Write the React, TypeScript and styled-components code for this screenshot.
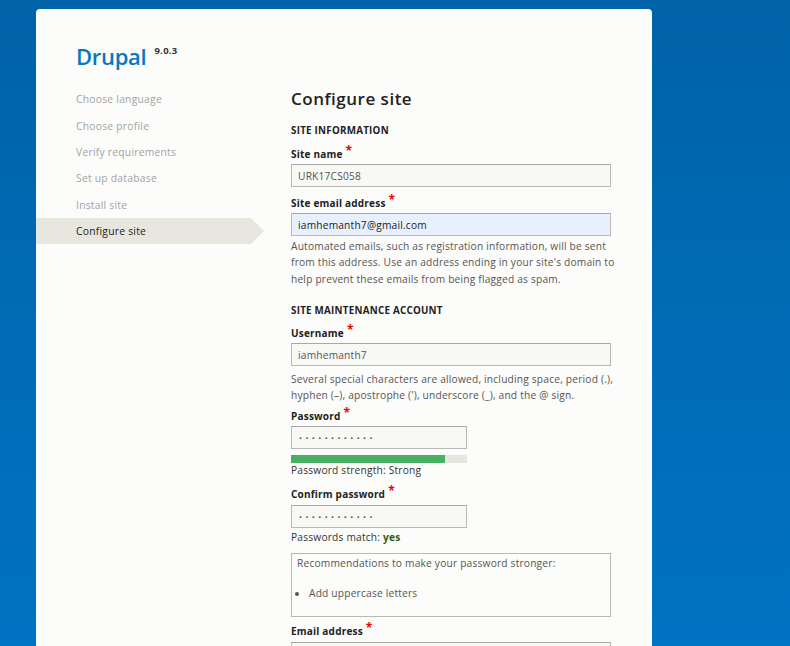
import React from "react";
import styled, { createGlobalStyle } from "styled-components";

const Global = createGlobalStyle`
  html, body { margin: 0; padding: 0; height: 100%; }
  body {
    background: linear-gradient(180deg, #0062a7 0%, #006bb6 50%, #0073c2 100%);
    font-family: "Open Sans", "Noto Sans", sans-serif;
    overflow: hidden;
  }
  #root { height: 646px; }
`;

const Page = styled.div`
  height: 646px;
  padding: 9px 138px 0 36px;
  box-sizing: border-box;
`;

const Card = styled.div`
  background: #fcfcfa;
  border-radius: 4px 4px 0 0;
  height: 100%;
  padding-top: 34px;
  box-sizing: border-box;
  overflow: hidden;
`;

const Brand = styled.div`
  display: flex;
  align-items: flex-start;
  padding-left: 40px;
  height: 43px;
`;

const Logo = styled.span`
  font-size: 22px;
  line-height: 26px;
  color: #0678be;
  font-weight: 600;
  letter-spacing: -0.3px;
`;

const Version = styled.span`
  font-size: 9.5px;
  font-weight: 700;
  color: #333;
  margin-left: 8px;
  margin-top: 1px;
  letter-spacing: 0.3px;
`;

const Layout = styled.div`
  display: grid;
  grid-template-columns: 228px 1fr;
  column-gap: 27px;
  padding-right: 35px;
`;

const Steps = styled.ol`
  list-style: none;
  margin: 0;
  padding: 0;
`;

const Step = styled.li<{ $active?: boolean }>`
  position: relative;
  height: 26.4px;
  display: flex;
  align-items: center;
  padding-left: 40px;
  font-size: 10.3px;
  letter-spacing: 0.25px;
  color: ${(p) => (p.$active ? "#222" : "#a3a3a3")};
  background: ${(p) => (p.$active ? "#e7e6df" : "transparent")};
  margin-right: ${(p) => (p.$active ? "13px" : "0")};
  &::after {
    content: "";
    display: ${(p) => (p.$active ? "block" : "none")};
    position: absolute;
    right: -13px;
    top: 0;
    border-left: 13px solid #e7e6df;
    border-top: 13.2px solid transparent;
    border-bottom: 13.2px solid transparent;
  }
`;

const Main = styled.div`
  color: #333;
`;

const Title = styled.h1`
  margin: 0;
  font-size: 17px;
  line-height: 20px;
  font-weight: 600;
  letter-spacing: 0.5px;
  color: #222;
  padding-top: 3px;
`;

const SectionTitle = styled.h2<{ $top?: number }>`
  margin: 0;
  font-size: 9.8px;
  line-height: 13px;
  font-weight: 700;
  letter-spacing: 0.25px;
  text-transform: uppercase;
  color: #222;
  margin-top: ${(p) => p.$top ?? 14.5}px;
`;

const Field = styled.div<{ $top?: number }>`
  margin-top: ${(p) => p.$top ?? 10}px;
`;

const Label = styled.label<{ $gap?: number }>`
  display: block;
  font-size: 10px;
  line-height: 13px;
  font-weight: 700;
  letter-spacing: 0.2px;
  color: #222;
  margin-bottom: ${(p) => p.$gap ?? 3.5}px;
`;

const Req = styled.span`
  color: #e00;
  font-size: 12px;
  margin-left: 3px;
  vertical-align: 3px;
  line-height: 0;
`;

const Input = styled.div<{ $narrow?: boolean; $autofill?: boolean }>`
  box-sizing: border-box;
  width: ${(p) => (p.$narrow ? "176px" : "320px")};
  height: 23px;
  border: 1px solid #b8b8b8;
  border-top-color: #a8a8a8;
  background: ${(p) => (p.$autofill ? "#e8f0fe" : "#f8f8f5")};
  font-size: 10.2px;
  letter-spacing: 0.2px;
  color: ${(p) => (p.$autofill ? "#222" : "#555")};
  display: flex;
  align-items: center;
  padding-left: 6px;
`;

const Dots = styled.span`
  letter-spacing: 3.4px;
  font-size: 8px;
  color: #555;
  padding-left: 1px;
`;

const Desc = styled.div<{ $top?: number }>`
  font-size: 10.2px;
  line-height: 16.5px;
  letter-spacing: 0.2px;
  color: #555;
  margin-top: ${(p) => p.$top ?? 1.75}px;
  max-width: 326px;
`;

const Meter = styled.div`
  width: 176px;
  height: 8px;
  background: #e6e6e0;
  margin-top: 6px;
`;

const MeterFill = styled.div`
  height: 100%;
  background: #48b063;
`;

const Status = styled.div<{ $top?: number }>`
  font-size: 10.2px;
  line-height: 14px;
  letter-spacing: 0.2px;
  color: #333;
  margin-top: ${(p) => p.$top ?? 0}px;
`;

const Yes = styled.strong`
  color: #325e1c;
`;

const Recs = styled.div`
  box-sizing: border-box;
  width: 320px;
  height: 64px;
  border: 1px solid #b8b8b8;
  margin-top: 9px;
  padding: 2px 5px;
  font-size: 10.2px;
  line-height: 14px;
  letter-spacing: 0.2px;
  color: #555;
`;

const RecList = styled.ul`
  margin: 16px 0 0;
  padding: 0 0 0 12px;
`;

const steps = [
  "Choose language",
  "Choose profile",
  "Verify requirements",
  "Set up database",
  "Install site",
  "Configure site",
];

export default function App() {
  return (
    <>
      <Global />
      <Page>
        <Card>
          <Brand>
            <Logo>Drupal</Logo>
            <Version>9.0.3</Version>
          </Brand>
          <Layout>
            <Steps>
              {steps.map((s, i) => (
                <Step key={s} $active={i === steps.length - 1}>
                  {s}
                </Step>
              ))}
            </Steps>
            <Main>
              <Title>Configure site</Title>
              <SectionTitle>Site information</SectionTitle>
              <Field $top={11}>
                <Label>
                  Site name<Req>*</Req>
                </Label>
                <Input>URK17CS058</Input>
              </Field>
              <Field $top={9.5}>
                <Label>
                  Site email address<Req>*</Req>
                </Label>
                <Input $autofill>iamhemanth7@gmail.com</Input>
                <Desc>
                  Automated emails, such as registration information, will be sent from this
                  address. Use an address ending in your site's domain to help prevent these
                  emails from being flagged as spam.
                </Desc>
              </Field>
              <SectionTitle $top={16.25}>Site maintenance account</SectionTitle>
              <Field $top={10}>
                <Label>
                  Username<Req>*</Req>
                </Label>
                <Input>iamhemanth7</Input>
                <Desc $top={4.75}>
                  Several special characters are allowed, including space, period (.), hyphen
                  (–), apostrophe ('), underscore (_), and the @ sign.
                </Desc>
              </Field>
              <Field $top={5.75}>
                <Label>
                  Password<Req>*</Req>
                </Label>
                <Input $narrow>
                  <Dots>••••••••••••</Dots>
                </Input>
                <Meter>
                  <MeterFill style={{ width: `${(154 / 176) * 100}%` }} />
                </Meter>
                <Status>Password strength: Strong</Status>
              </Field>
              <Field $top={10.5}>
                <Label $gap={4}>
                  Confirm password<Req>*</Req>
                </Label>
                <Input $narrow>
                  <Dots>••••••••••••</Dots>
                </Input>
                <Status $top={2}>
                  Passwords match: <Yes>yes</Yes>
                </Status>
                <Recs>
                  Recommendations to make your password stronger:
                  <RecList>
                    <li>Add uppercase letters</li>
                  </RecList>
                </Recs>
              </Field>
              <Field $top={8.5}>
                <Label>
                  Email address<Req>*</Req>
                </Label>
                <Input />
              </Field>
            </Main>
          </Layout>
        </Card>
      </Page>
    </>
  );
}
